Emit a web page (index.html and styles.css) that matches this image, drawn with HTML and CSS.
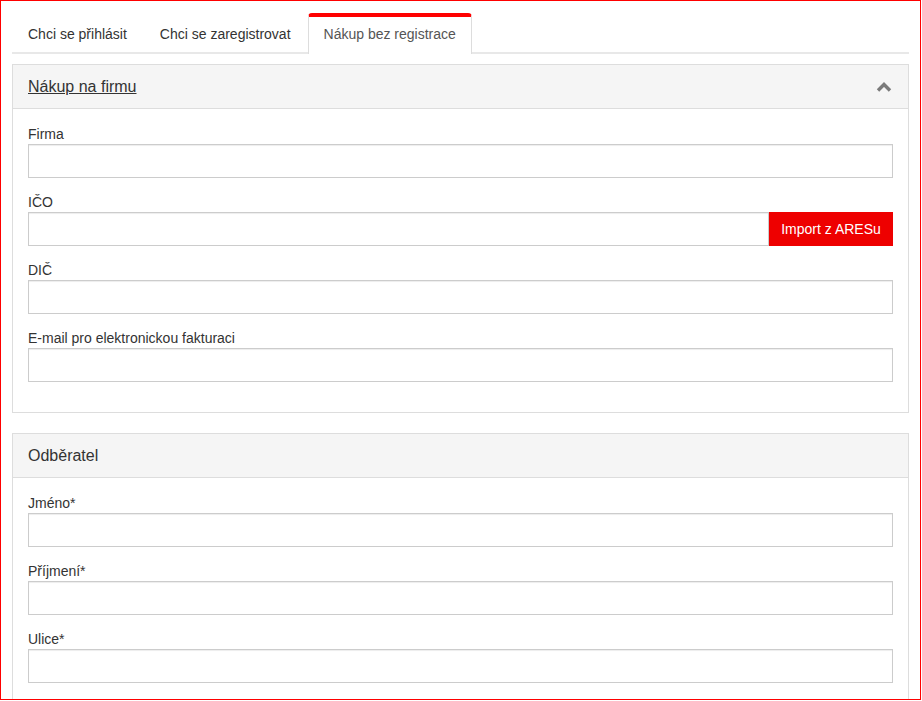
FILE: index.html
```html
<!DOCTYPE html>
<html lang="cs">
<head>
<meta charset="utf-8">
<title>Nákup bez registrace</title>
<link rel="stylesheet" href="styles.css">
</head>
<body>
<div class="frame">
  <ul class="tabs">
    <li class="tab"><a href="#">Chci se přihlásit</a></li>
    <li class="tab"><a href="#">Chci se zaregistrovat</a></li>
    <li class="tab active"><a href="#">Nákup bez registrace</a></li>
  </ul>

  <div class="panel">
    <div class="panel-heading">
      <a class="panel-title link" href="#">Nákup na firmu</a>
      <svg class="chevron" width="16" height="10" viewBox="0 0 16 10"><path d="M2 8.5 L8 2.5 L14 8.5" fill="none" stroke="#7a7a7a" stroke-width="3.4" stroke-linecap="butt" stroke-linejoin="miter"/></svg>
    </div>
    <div class="panel-body first-body">
      <div class="group">
        <label>Firma</label>
        <input class="control" type="text">
      </div>
      <div class="group">
        <label>IČO</label>
        <div class="input-group">
          <input class="control" type="text">
          <button class="btn-red" type="button">Import z ARESu</button>
        </div>
      </div>
      <div class="group">
        <label>DIČ</label>
        <input class="control" type="text">
      </div>
      <div class="group">
        <label>E-mail pro elektronickou fakturaci</label>
        <input class="control" type="text">
      </div>
    </div>
  </div>

  <div class="panel second">
    <div class="panel-heading">
      <span class="panel-title">Odběratel</span>
    </div>
    <div class="panel-body">
      <div class="group">
        <label>Jméno*</label>
        <input class="control" type="text">
      </div>
      <div class="group">
        <label>Příjmení*</label>
        <input class="control" type="text">
      </div>
      <div class="group">
        <label>Ulice*</label>
        <input class="control" type="text">
      </div>
    </div>
  </div>
</div>
</body>
</html>
```

FILE: styles.css
```css
* { box-sizing: border-box; }

html, body {
  margin: 0;
  padding: 0;
  background: #fff;
}

body {
  font-family: "Liberation Sans", Arial, sans-serif;
  font-size: 14px;
  line-height: 20px;
  color: #333;
}

.frame {
  width: 921px;
  height: 700px;
  border: 1px solid #ff0000;
  padding: 12px 11px 0 11px;
  overflow: hidden;
}

.tabs {
  list-style: none;
  margin: 0;
  padding: 0;
  display: flex;
  border-bottom: 2px solid #e8e8e8;
}

.tab {
  margin-bottom: -2px;
  margin-right: 1px;
  border: 1px solid transparent;
  border-top: 4px solid transparent;
  border-bottom: none;
  border-radius: 4px 4px 0 0;
  padding: 7px 15px 10px 15px;
}

.tab a {
  color: #333;
  text-decoration: none;
  display: block;
}

.tab.active {
  background: #fff;
  border-color: #ddd;
  border-top-color: #ff0000;
}

.tab.active a {
  color: #555;
}

.panel {
  margin-top: 10px;
  border: 1px solid #dddddd;
  background: #fff;
}

.panel.second {
  margin-top: 20px;
}

.panel-heading {
  display: flex;
  align-items: center;
  justify-content: space-between;
  background: #f5f5f5;
  border-bottom: 1px solid #dddddd;
  padding: 11px 15px 10px 15px;
  height: 44px;
}

.panel-title {
  font-size: 16px;
  line-height: 22px;
  color: #333;
}

.panel-title.link {
  text-decoration: underline;
}

.chevron {
  display: block;
  margin-right: 1px;
}

.panel-body {
  padding: 15px 15px 15px 15px;
}

.panel-body.first-body {
  padding-bottom: 16px;
}

.group {
  margin-bottom: 14px;
}

.group label {
  display: block;
  line-height: 20px;
  color: #333;
}

.control {
  display: block;
  width: 100%;
  height: 34px;
  margin: 0;
  border: 1px solid #cccccc;
  border-radius: 0;
  box-shadow: inset 0 1px 1px rgba(0, 0, 0, 0.075);
  background: #fff;
  font-family: inherit;
  font-size: 14px;
  padding: 6px 12px;
}

.input-group {
  display: flex;
}

.input-group .control {
  flex: 1;
  width: auto;
  min-width: 0;
}

.btn-red {
  flex: none;
  width: 124px;
  height: 34px;
  margin: 0;
  border: none;
  border-radius: 0;
  background: #ee0000;
  color: #fff;
  font-family: inherit;
  font-size: 14px;
  padding: 0 10px;
}
```
